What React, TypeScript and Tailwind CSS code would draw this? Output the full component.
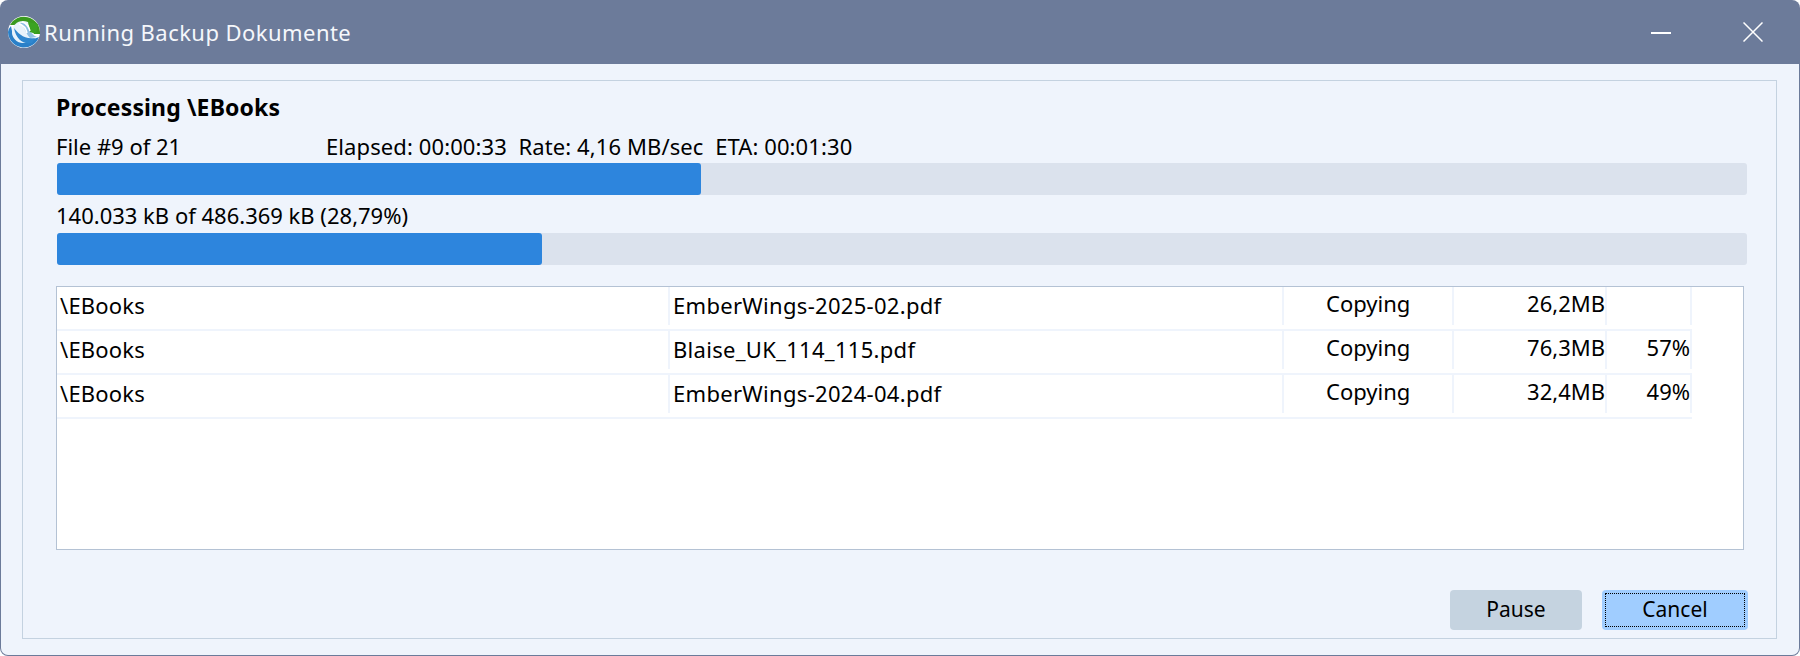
import React from "react";

const font = { fontFamily: '"Noto Sans", "Open Sans", sans-serif' };

const rows = [
  { folder: "\\EBooks", file: "EmberWings-2025-02.pdf", action: "Copying", size: "26,2MB", pct: "" },
  { folder: "\\EBooks", file: "Blaise_UK_114_115.pdf", action: "Copying", size: "76,3MB", pct: "57%" },
  { folder: "\\EBooks", file: "EmberWings-2024-04.pdf", action: "Copying", size: "32,4MB", pct: "49%" },
];

function Logo() {
  return (
    <svg width="32" height="32" viewBox="0 0 32 32" className="shrink-0">
      <circle cx="16" cy="16" r="16" fill="#ffffff" />
      <path d="M2 9A16 16 0 0 1 32 16L32 18L25 18A10 10 0 0 0 8 9Z" fill="#3a9a1f" />
      <path d="M0 16A16 16 0 0 0 31 21L23 24C17 28 9 27 5 20L3 10Q0 13 0 16Z" fill="#2a80c8" />
      <circle cx="15" cy="16" r="11" fill="#e8f3fb" />
      <path d="M12 7C17 10 17 17 22 22L29 21C23 19 21 12 16 7Z" fill="#8fc0e4" />
      <path d="M6 12C10 17 16 24 27 22L24 27C15 29 8 23 6 12Z" fill="#2f87cf" />
      <path d="M20 6L30 8L28 18L22 16Z" fill="#3ba321" />
      <path d="M14 6C18 7 21 10 22 15" stroke="#ffffff" strokeWidth="1.5" fill="none" />
      <path d="M11 8C15 9 18 12 19 17" stroke="#ffffff" strokeWidth="1.5" fill="none" />
    </svg>
  );
}

function ProgressBar({ width }: { width: number }) {
  return (
    <div className="h-8 w-[1690px] rounded-[3px] bg-[#dbe2ed]">
      <div className="h-8 rounded-[3px] bg-[#2d85dd]" style={{ width }} />
    </div>
  );
}

export default function App() {
  return (
    <div className="flex h-[656px] w-[1800px] flex-col overflow-hidden rounded-[8px] bg-[#6c7b9a] text-[22px] text-black" style={font}>
      <div className="flex h-16 shrink-0 items-center pl-2 text-[#f5f7fb]">
        <Logo />
        <span className="ml-[4px] text-[22px] tracking-[0.45px]">Running Backup Dokumente</span>
        <div className="ml-auto flex items-center">
          <svg width="20" height="20" viewBox="0 0 20 20" className="mr-[72px]">
            <rect x="0" y="10" width="20" height="2" fill="#ffffff" />
          </svg>
          <svg width="20" height="20" viewBox="0 0 20 20" className="mr-[37px]">
            <path d="M0.5 0.5L19.5 19.5M19.5 0.5L0.5 19.5" stroke="#ffffff" strokeWidth="1.5" />
          </svg>
        </div>
      </div>

      <div className="mx-px mb-px min-h-0 flex-1 rounded-b-[7px] bg-[#eff4fc] pb-4 pl-[21px] pr-[22px] pt-4">
        <div className="h-[559px] border border-[#c4d2e0] pl-[34px] pt-2">
          <div className="-ml-px h-[36px] text-[23px] font-bold leading-[36px] tracking-[0.13px]">Processing \EBooks</div>
          <div className="-ml-px flex h-[38px] items-center pt-1 leading-none">
            <span className="w-[270px]">File #9 of 21</span>
            <span className="whitespace-pre tracking-[0.1px]">Elapsed: 00:00:33  Rate: 4,16 MB/sec  ETA: 00:01:30</span>
          </div>
          <ProgressBar width={644} />
          <div className="-ml-px flex h-[38px] items-center pt-[2px] leading-none">140.033 kB of 486.369 kB (28,79%)</div>
          <ProgressBar width={485} />

          <div className="-ml-px mt-[21px] h-[264px] w-[1688px] border border-[#b4c2d4] bg-white">
            {rows.map((row) => (
              <div key={row.file} className="flex h-11 w-[1635px] border-b-2 border-[#eff4fc] pb-[4px] leading-[37px]">
                <div className="w-[613px] border-r-2 border-[#eff4fc] pl-[3px] tracking-[0.2px]">{row.folder}</div>
                <div className="w-[614px] border-r-2 border-[#eff4fc] pl-[3px] tracking-[0.3px]">{row.file}</div>
                <div className="w-[170px] border-r-2 border-[#eff4fc] pl-[42px] leading-[33px]">{row.action}</div>
                <div className="w-[153px] border-r-2 border-[#eff4fc] text-right leading-[33px]">{row.size}</div>
                <div className="w-[85px] border-r-2 border-[#eff4fc] text-right leading-[33px]">{row.pct}</div>
              </div>
            ))}
          </div>

          <div className="mt-[40px] flex w-[1691px] justify-end gap-5 text-[21px]">
            <button className="h-10 w-[132px] rounded-[4px] bg-[#c5d3e0]">Pause</button>
            <button className="h-10 w-[146px] rounded-[4px] bg-[#a0cdff] p-[3px]">
              <span className="flex h-full w-full items-center justify-center border border-dotted border-black">Cancel</span>
            </button>
          </div>
        </div>
      </div>
    </div>
  );
}
